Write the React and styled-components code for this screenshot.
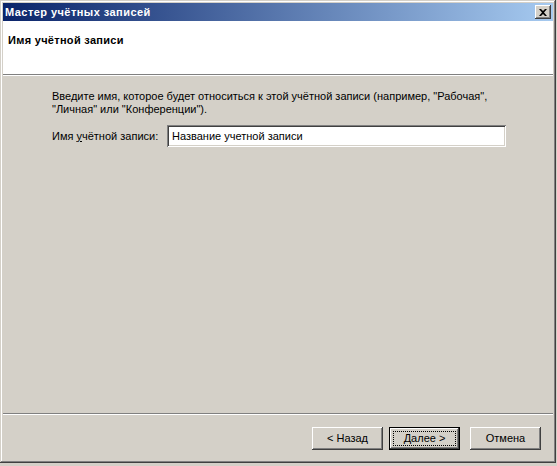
import React from "react";
import styled, { createGlobalStyle } from "styled-components";

const Global = createGlobalStyle`
  html, body { margin: 0; padding: 0; background: #d4d0c8; }
  body { font-family: Tahoma, "Liberation Sans", "DejaVu Sans", sans-serif; font-size: 11px; color: #000; }
  #root { width: 557px; height: 466px; overflow: hidden; }
`;

const Window = styled.div`
  width: 556px;
  height: 463px;
  box-sizing: border-box;
  padding: 3px;
  background: #d4d0c8;
  display: flex;
  flex-direction: column;
  box-shadow: inset -1px -1px #404040, inset 1px 1px #d4d0c8, inset -2px -2px #808080, inset 2px 2px #ffffff;
`;

const TitleBar = styled.div`
  height: 18px;
  flex: none;
  display: flex;
  align-items: center;
  justify-content: space-between;
  padding: 0 2px 0 2px;
  background: linear-gradient(to right, #0a246a, #a6caf0);
`;

const TitleText = styled.span`
  color: #fff;
  font-weight: bold;
  font-size: 11px;
  line-height: 13px;
  letter-spacing: 0.45px;
`;

const CloseButton = styled.div`
  width: 16px;
  height: 14px;
  box-sizing: border-box;
  background: #d4d0c8;
  display: flex;
  align-items: center;
  justify-content: center;
  box-shadow: inset -1px -1px #404040, inset 1px 1px #ffffff, inset -2px -2px #808080, inset 2px 2px #d4d0c8;
`;

const Header = styled.div`
  height: 53px;
  flex: none;
  box-sizing: border-box;
  background: #fff;
  padding: 13px 5px 0;
`;

const HeaderTitle = styled.div`
  font-weight: bold;
  line-height: 13px;
  letter-spacing: 0.3px;
`;

const Separator = styled.div`
  height: 2px;
  flex: none;
  box-sizing: border-box;
  border-top: 1px solid #808080;
  border-bottom: 1px solid #ffffff;
`;

const Body = styled.div`
  flex: 1;
  padding: 14px 0 0 49px;
  display: flex;
  flex-direction: column;
`;

const Paragraph = styled.p`
  margin: 0;
  line-height: 13px;
  white-space: nowrap;
`;

const FieldRow = styled.div`
  display: flex;
  align-items: center;
  margin-top: 9px;
`;

const Label = styled.label`
  width: 115px;
  flex: none;
  line-height: 13px;
`;

const Field = styled.div`
  width: 339px;
  height: 22px;
  box-sizing: border-box;
  background: #fff;
  padding: 0 5px;
  display: flex;
  align-items: center;
  line-height: 13px;
  box-shadow: inset 1px 1px #808080, inset -1px -1px #ffffff, inset 2px 2px #404040, inset -2px -2px #d4d0c8;
`;

const ButtonBar = styled.div`
  flex: none;
  display: flex;
  justify-content: flex-end;
  padding: 12px 12px 10px 0;
`;

const Button = styled.div`
  width: 71px;
  height: 23px;
  box-sizing: border-box;
  margin-left: ${(p) => p.$gap || 0}px;
  display: flex;
  align-items: center;
  justify-content: center;
  background: #d4d0c8;
  line-height: 13px;
  position: relative;
  box-shadow: ${(p) =>
    p.$default
      ? "inset 0 0 0 1px #000, inset -2px -2px #404040, inset 2px 2px #ffffff, inset -3px -3px #808080"
      : "inset -1px -1px #404040, inset 1px 1px #ffffff, inset -2px -2px #808080, inset 2px 2px #d4d0c8"};
`;

const Focus = styled.span`
  position: absolute;
  inset: 4px;
  border: 1px dotted #000;
`;

export default function App() {
  return (
    <>
      <Global />
      <Window>
        <TitleBar>
          <TitleText>Мастер учётных записей</TitleText>
          <CloseButton>
            <svg width="8" height="7" viewBox="0 0 8 7">
              <path d="M0 0h2l2 2 2-2h2L5 3.5 8 7H6L4 5 2 7H0l3-3.5z" fill="#000" />
            </svg>
          </CloseButton>
        </TitleBar>
        <Header>
          <HeaderTitle>Имя учётной записи</HeaderTitle>
        </Header>
        <Separator />
        <Body>
          <Paragraph>
            Введите имя, которое будет относиться к этой учётной записи (например, "Рабочая",
            <br />
            "Личная" или "Конференции").
          </Paragraph>
          <FieldRow>
            <Label>
              Имя <u>у</u>чётной записи:
            </Label>
            <Field>Название учетной записи</Field>
          </FieldRow>
        </Body>
        <Separator />
        <ButtonBar>
          <Button>&lt; Назад</Button>
          <Button $default $gap={6}>
            Далее &gt;
            <Focus />
          </Button>
          <Button $gap={10}>Отмена</Button>
        </ButtonBar>
      </Window>
    </>
  );
}
